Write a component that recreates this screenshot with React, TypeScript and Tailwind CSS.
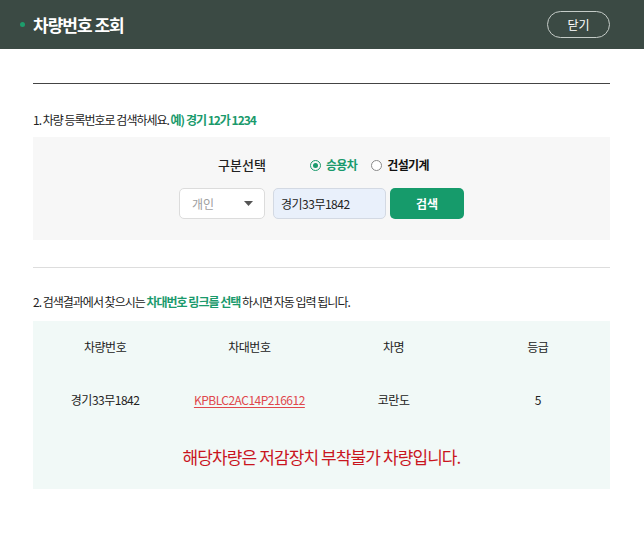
import { useState } from "react";

const rows = [
  { plate: "경기33무1842", vin: "KPBLC2AC14P216612", name: "코란도", grade: "5" },
];

const Radio = ({ checked, label, onClick }: { checked: boolean; label: string; onClick: () => void }) => (
  <button type="button" onClick={onClick} className="flex items-center gap-[5px]">
    <span
      className={`flex h-[11px] w-[11px] items-center justify-center rounded-full border ${
        checked ? "border-[#1a9a6c]" : "border-[#8a8a8a] bg-white"
      }`}
    >
      {checked && <span className="h-[5px] w-[5px] rounded-full bg-[#1a9a6c]" />}
    </span>
    <span className={`text-[12px] font-bold tracking-[-0.6px] ${checked ? "text-[#1a9a6c]" : "text-[#111]"}`}>
      {label}
    </span>
  </button>
);

export default function App() {
  const [kind, setKind] = useState("car");
  const [plate, setPlate] = useState("경기33무1842");

  return (
    <div className="min-h-[550px] bg-white font-['Noto_Sans_CJK_KR','Noto_Sans',sans-serif] text-[#222]">
      {/* Header */}
      <header className="flex h-[49px] items-center justify-between bg-[#3b4a44] pl-[20px] pr-[34px]">
        <div className="flex items-center gap-[8px]">
          <span className="h-[5px] w-[5px] rounded-full bg-[#1d9d6c]" />
          <h1 className="text-[17px] font-bold tracking-[-1px] text-white">차량번호 조회</h1>
        </div>
        <button className="h-[27px] w-[63px] rounded-full border-[1.5px] border-[#c5ccc8] text-[12px] text-white">
          닫기
        </button>
      </header>

      <main className="px-[33px] pr-[34px]">
        <div className="mt-[34px] h-px bg-[#444]" />

        <p className="mt-[27px] text-[12px] leading-[18px] tracking-[-1px]">
          1. 차량 등록번호로 검색하세요. <b className="font-bold text-[#1a9a6c]">예) 경기 12가 1234</b>
        </p>

        {/* Search box */}
        <section className="mt-[8px] bg-[#f7f7f7] pb-[21px] pt-[18px]">
          <div className="flex h-[20px] items-center justify-center pl-[4px]">
            <span className="mr-[44px] text-[13px] font-medium tracking-[0px] text-[#222]">구분선택</span>
            <div className="flex items-center gap-[14px]">
              <Radio checked={kind === "car"} label="승용차" onClick={() => setKind("car")} />
              <Radio checked={kind === "machine"} label="건설기계" onClick={() => setKind("machine")} />
            </div>
          </div>
          <div className="mt-[13px] flex justify-center">
            <button className="flex h-[31px] w-[86px] items-center justify-between rounded-[5px] border border-[#dcdcdc] bg-white pl-[12px] pr-[11px] text-[12px] text-[#a0a0a0]">
              개인
              <svg width="9" height="5" viewBox="0 0 9 5">
                <path d="M0 0h9L4.5 5z" fill="#555" />
              </svg>
            </button>
            <input
              value={plate}
              onChange={(e) => setPlate(e.target.value)}
              className="ml-[8px] h-[31px] w-[113px] rounded-[5px] border border-[#d3d9e3] bg-[#e9f0fb] px-[7px] text-[12px] tracking-[-0.5px] text-[#222] outline-none"
            />
            <button className="ml-[4px] h-[31px] w-[74px] rounded-[5px] bg-[#169b6b] text-[12px] font-bold text-white">
              검색
            </button>
          </div>
        </section>

        <div className="mt-[27px] h-px bg-[#dddddd]" />

        <p className="mt-[25px] text-[12px] leading-[18px] tracking-[-1px]">
          2. 검색결과에서 찾으시는 <b className="font-bold text-[#1a9a6c]">차대번호 링크를 선택</b> 하시면 자동 입력 됩니다.
        </p>

        {/* Result table */}
        <section className="mt-[10px] bg-[#f1f9f7] pb-[20px] pt-[14px] text-[12px] tracking-[-0.5px]">
          <div className="grid h-[24px] grid-cols-4 items-center text-center text-[#222]">
            <span>차량번호</span>
            <span>차대번호</span>
            <span>차명</span>
            <span>등급</span>
          </div>
          {rows.map((r) => (
            <div key={r.vin} className="mt-[29px] grid h-[24px] grid-cols-4 items-center text-center text-[#222]">
              <span>{r.plate}</span>
              <a href="#" className="text-[#e0474c] underline underline-offset-2">
                {r.vin}
              </a>
              <span>{r.name}</span>
              <span>{r.grade}</span>
            </div>
          ))}
          <p className="mt-[33px] h-[24px] text-center text-[17px] leading-[24px] tracking-[-0.9px] text-[#c9151e]">
            해당차량은 저감장치 부착불가 차량입니다.
          </p>
        </section>
      </main>
    </div>
  );
}
